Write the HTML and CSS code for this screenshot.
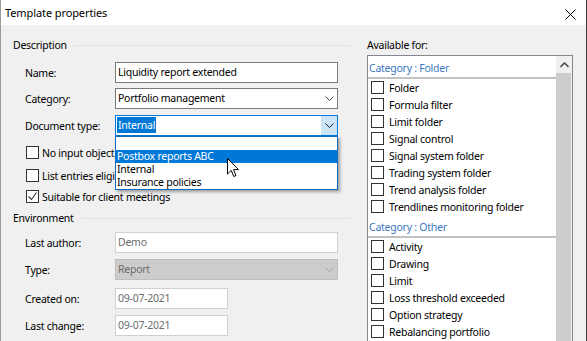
FILE: index.html
```html
<!DOCTYPE html>
<html lang="en">
<head>
  <meta charset="UTF-8">
  <meta name="viewport" content="width=device-width, initial-scale=1.0">
  <title>Template properties</title>
  <link rel="stylesheet" href="styles.css">
</head>
<body>
<div class="window">
  <div class="titlebar">
    <span>Template properties</span>
    <svg class="close" width="11" height="11" viewBox="0 0 11 11"><path d="M0.5 0.5L10.5 10.5M10.5 0.5L0.5 10.5" stroke="#000" stroke-width="1"/></svg>
  </div>

  <div class="content">
    <div class="left">
      <div class="section"><span>Description</span><i class="rule"></i></div>

      <div class="row row-first">
        <label>Name:</label>
        <div class="input">Liquidity report extended</div>
      </div>
      <div class="row">
        <label>Category:</label>
        <div class="input combo">
          <span class="value">Portfolio management</span>
          <span class="drop"><svg width="9" height="5" viewBox="0 0 9 5"><path d="M0.5 0.5L4.5 4.5L8.5 0.5" fill="none" stroke="#444"/></svg></span>
        </div>
      </div>
      <div class="row row-doc">
        <label>Document type:</label>
        <div class="input combo focused">
          <span class="value"><span class="selected">Internal</span></span>
          <span class="drop"><svg width="9" height="5" viewBox="0 0 9 5"><path d="M0.5 0.5L4.5 4.5L8.5 0.5" fill="none" stroke="#222"/></svg></span>
          <div class="dropdown">
            <div class="option"></div>
            <div class="option active">Postbox reports ABC</div>
            <div class="option">Internal</div>
            <div class="option">Insurance policies</div>
          </div>
        </div>
      </div>

      <div class="checks">
        <div class="check"><span class="box"></span>No input object required</div>
        <div class="check check-2"><span class="box"></span>List entries eligible for selection</div>
        <div class="check check-3"><span class="box checked"><svg width="11" height="11" viewBox="0 0 11 11"><path d="M1.5 5.5L4.5 8.5L9.5 1.5" fill="none" stroke="#333" stroke-width="1.1"/></svg></span>Suitable for client meetings</div>
      </div>

      <div class="section section-env"><span>Environment</span><i class="rule"></i></div>

      <div class="row row-env">
        <label>Last author:</label>
        <div class="input readonly">Demo</div>
      </div>
      <div class="row row-type">
        <label>Type:</label>
        <div class="input combo disabled">
          <span class="value">Report</span>
          <span class="drop"><svg width="9" height="5" viewBox="0 0 9 5"><path d="M0.5 0.5L4.5 4.5L8.5 0.5" fill="none" stroke="#a6a6a6"/></svg></span>
        </div>
      </div>
      <div class="row row-created">
        <label>Created on:</label>
        <div class="input readonly short">09-07-2021</div>
      </div>
      <div class="row row-change">
        <label>Last change:</label>
        <div class="input readonly short">09-07-2021</div>
      </div>
    </div>

    <div class="right">
      <div class="caption">Available for:</div>
      <div class="listbox">
        <div class="list">
          <div class="group">Category : Folder</div>
          <div class="item"><span class="box"></span>Folder</div>
          <div class="item"><span class="box"></span>Formula filter</div>
          <div class="item"><span class="box"></span>Limit folder</div>
          <div class="item"><span class="box"></span>Signal control</div>
          <div class="item"><span class="box"></span>Signal system folder</div>
          <div class="item"><span class="box"></span>Trading system folder</div>
          <div class="item"><span class="box"></span>Trend analysis folder</div>
          <div class="item"><span class="box"></span>Trendlines monitoring folder</div>
          <div class="group">Category : Other</div>
          <div class="item"><span class="box"></span>Activity</div>
          <div class="item"><span class="box"></span>Drawing</div>
          <div class="item"><span class="box"></span>Limit</div>
          <div class="item"><span class="box"></span>Loss threshold exceeded</div>
          <div class="item"><span class="box"></span>Option strategy</div>
          <div class="item"><span class="box"></span>Rebalancing portfolio</div>
        </div>
        <div class="scrollbar">
          <div class="arrow"><svg width="9" height="6" viewBox="0 0 9 6"><path d="M0.5 5L4.5 1L8.5 5" fill="none" stroke="#505050" stroke-width="1.6"/></svg></div>
          <div class="thumb"></div>
        </div>
      </div>
    </div>
  </div>

  <svg class="pointer" width="13" height="20" viewBox="0 0 13 20"><path d="M0.5 0.5L0.5 16L4.2 12.4L6.8 18.5L9 17.5L6.5 11.6L11.5 11.6Z" fill="#fff" stroke="#000" stroke-width="1" stroke-linejoin="round"/></svg>
</div>
</body>
</html>
```

FILE: styles.css
```css
* {
  box-sizing: border-box;
}
body {
  margin: 0;
  font-family: "Noto Sans", sans-serif;
  font-size: 10.5px;
  letter-spacing: -0.25px;
  color: #000;
  overflow: hidden;
}
.window {
  position: relative;
  width: 587px;
  height: 341px;
  background-color: #f0f0f0;
  border-left: 1px solid #9a9a9a;
  border-right: 1px solid #3c3c3c;
  overflow: hidden;
}
.titlebar {
  height: 25px;
  background-color: #fff;
  display: flex;
  align-items: center;
  justify-content: space-between;
  padding: 0 10px 0 4px;
  font-size: 11px;
  letter-spacing: -0.1px;
}
.titlebar .close {
  margin-top: 3px;
}

.content {
  display: flex;
}
.left {
  width: 366px;
  padding: 0 16px 0 12px;
}
.section {
  display: flex;
  align-items: center;
  height: 16px;
  margin-top: 12px;
}
.section .rule {
  flex: 1;
  height: 1px;
  margin-left: 7px;
  background-color: #dbe2e8;
}
.section-env {
  margin-top: 5px;
}

.row {
  display: flex;
  align-items: center;
  padding-left: 12px;
  margin-top: 5px;
}
.row label {
  width: 90px;
}
.row-first {
  margin-top: 9px;
}
.row-doc {
  margin-top: 6px;
}
.input {
  position: relative;
  width: 223px;
  height: 21px;
  line-height: 19px;
  padding-left: 2px;
  background-color: #fff;
  border: 1px solid #7a7a7a;
  white-space: nowrap;
}
.input.short {
  width: 113px;
}
.input.readonly {
  border-color: #d0d0d0;
  color: #6d6d6d;
}
.combo {
  display: flex;
}
.combo .value {
  flex: 1;
}
.combo .drop {
  width: 16px;
  display: flex;
  align-items: center;
  justify-content: center;
}
.combo.focused {
  border-color: #0078d7;
  padding-left: 1px;
}
.combo.focused .drop {
  background-color: #cce4f7;
}
.combo.disabled {
  background-color: #cccccc;
  border-color: #bfbfbf;
  color: #6d6d6d;
}
.selected {
  display: inline-block;
  line-height: 16px;
  padding: 0 1px;
  background-color: #0078d7;
  color: #fff;
}

.dropdown {
  position: absolute;
  z-index: 5;
  top: 20px;
  left: -1px;
  width: 223px;
  background-color: #fff;
  border: 1px solid #0f6cbd;
  box-shadow: 2px 2px 3px rgba(0, 0, 0, 0.35);
}
.option {
  height: 13px;
  line-height: 13px;
  padding-left: 1px;
}
.option.active {
  background-color: #0078d7;
  color: #fff;
}

.checks {
  padding-left: 13px;
  margin-top: 8px;
}
.check {
  display: flex;
  align-items: center;
  height: 17px;
  white-space: nowrap;
}
.check-2 {
  margin-top: 6px;
}
.check-3 {
  margin-top: 4px;
}
.box {
  width: 13px;
  height: 13px;
  margin-right: 3px;
  background-color: #fff;
  border: 1px solid #333;
  display: flex;
  align-items: center;
  justify-content: center;
  flex-shrink: 0;
}

.row-env {
  margin-top: 6px;
}
.row-type {
  margin-top: 6px;
}
.row-created {
  margin-top: 8px;
}
.row-change {
  margin-top: 6px;
}

.right {
  width: 206px;
}
.caption {
  height: 16px;
  line-height: 16px;
  margin-top: 12px;
}
.listbox {
  display: flex;
  height: 300px;
  margin-top: 2px;
  background-color: #fff;
  border: 1px solid #828790;
}
.list {
  flex: 1;
}
.group {
  height: 23px;
  padding: 5px 0 0 1px;
  color: #3d78c0;
  border-bottom: 2px solid #c2c2c2;
}
.item {
  display: flex;
  align-items: center;
  height: 17px;
  padding-left: 3px;
}
.item .box {
  margin-right: 5px;
}
.scrollbar {
  width: 16px;
  background-color: #f0f0f0;
}
.scrollbar .arrow {
  height: 17px;
  display: flex;
  align-items: center;
  justify-content: center;
}
.scrollbar .thumb {
  width: 15px;
  height: 280px;
  background-color: #cdcdcd;
}

.pointer {
  position: absolute;
  left: 226px;
  top: 158px;
  z-index: 10;
}
```
